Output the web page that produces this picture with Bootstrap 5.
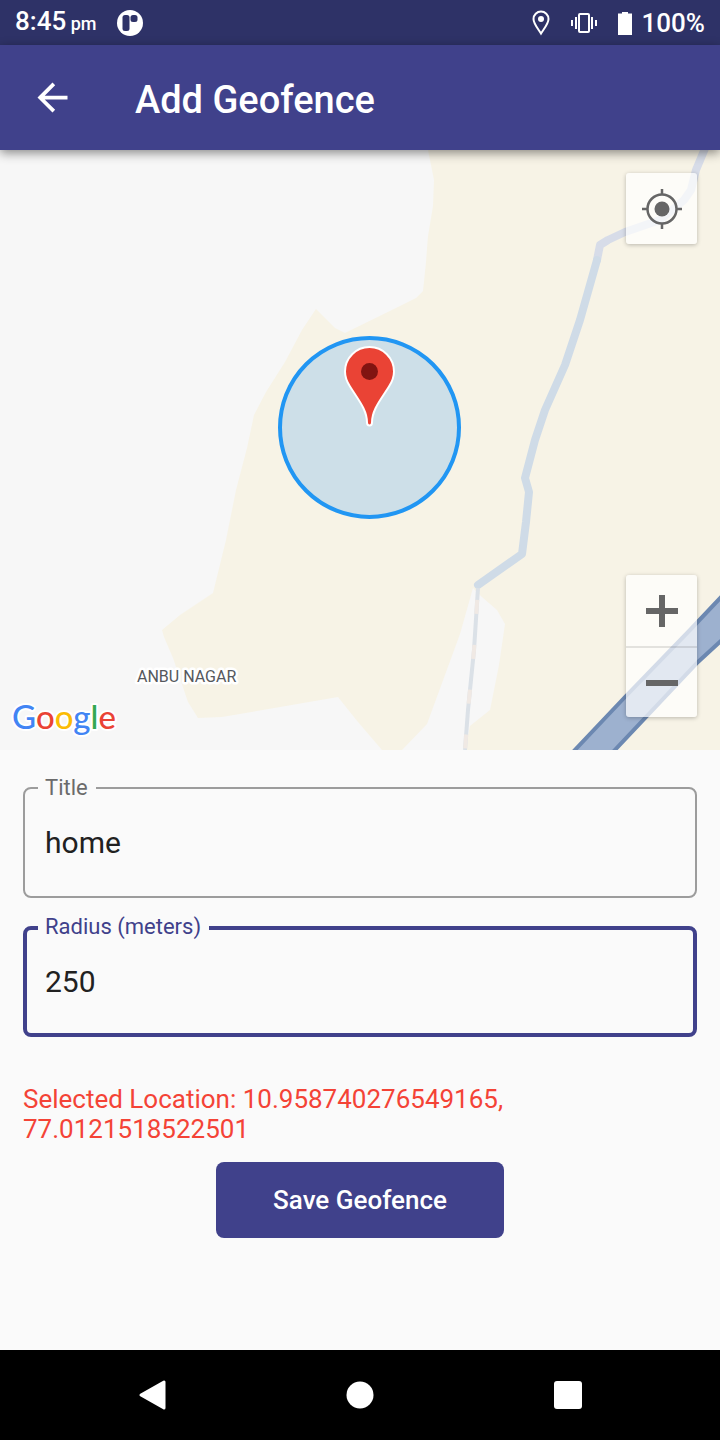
<!DOCTYPE html>
<html lang="en">
<head>
<meta charset="utf-8">
<meta name="viewport" content="width=device-width, initial-scale=1">
<title>Add Geofence</title>
<link href="https://cdn.jsdelivr.net/npm/bootstrap@5.3.0/dist/css/bootstrap.min.css" rel="stylesheet">
<style>
  :root { --brand: #40418b; --brand-dark: #2e3267; }
  body { font-family: Roboto, "Noto Sans", sans-serif; background: #fafafa; color: #212121; }
  .status-bar { height: 45px; padding: 0 15px; background: var(--brand-dark); font-size: 26px; font-weight: 500; line-height: 48px; }
  .status-bar .meridiem { margin-left: -2px; font-size: 18px; }
  .status-icons { gap: 21px; margin-right: 10px; }
  .app-badge { margin-left: 20px; }
  .app-bar { height: 105px; padding: 0 30px; gap: 60px; background: var(--brand); box-shadow: 0 3px 10px rgba(0,0,0,.45); z-index: 2; }
  .app-bar h1 { font-size: 38px; font-weight: 500; line-height: 48px; }
  .pane { flex: 1 1 0; }
  .map-pane { min-height: 400px; }
  .map-art { position: absolute; inset: 0; width: 100%; height: 100%; }
  .map-label { font-size: 16px; fill: #55585d; stroke: #fff; stroke-width: 5px; paint-order: stroke; stroke-linejoin: round; }
  .map-logo { font-family: Lato, sans-serif; font-size: 33px; font-weight: 500; stroke: #fff; stroke-width: 4px; paint-order: stroke; stroke-linejoin: round; }
  .map-ctl { width: 71px; background: rgba(255,255,255,.7); border-radius: 3px; box-shadow: 0 1px 4px rgba(0,0,0,.25); right: 23px; overflow: hidden; }
  .map-ctl.locate { top: 23px; }
  .map-ctl.zoom { bottom: 33px; }
  .map-ctl button { height: 71px; }
  .map-ctl button + button { border-top: 2px solid rgba(0,0,0,.1) !important; }
  .form-body { padding: 37px 23px 24px; }
  .outlined { margin-bottom: 28px; }
  .outlined label { position: absolute; top: -14px; left: 15px; padding: 0 8px 0 7px; background: #fafafa; color: #6b6b6b; font-size: 22px; line-height: 30px; }
  .outlined input { height: 111px; padding: 0 20px; border: 2px solid #9c9c9c; border-radius: 8px; background: transparent; color: #212121; font-size: 30px; }
  .outlined.active label { color: var(--brand); }
  .outlined.active input { border: 4px solid var(--brand); padding: 0 18px; }
  .location { margin: 47px 0 18px; color: #f44336; font-size: 26px; line-height: 30px; }
  .btn-save { height: 76px; padding: 0 57px; border-radius: 8px; background: var(--brand); color: #fff; font-size: 26px; font-weight: 500; }
  .btn-save:hover { background: var(--brand-dark); color: #fff; }
  .nav-keys { height: 90px; }
</style>
</head>
<body>
<div class="d-flex flex-column min-vh-100">
  <div class="status-bar d-flex align-items-center text-white">
    <span>8:45 <span class="meridiem">pm</span></span>
    <svg class="app-badge me-auto" width="28" height="28" viewBox="0 0 28 28" aria-hidden="true">
      <circle cx="14" cy="14" r="13" fill="#fff"/>
      <rect x="6.500" y="6" width="7" height="16" rx="2.500" fill="#2e3267"/>
      <rect x="14.500" y="6" width="7" height="7" rx="2.500" fill="#2e3267"/>
    </svg>
    <div class="status-icons d-flex align-items-center">
      <svg width="18" height="26" viewBox="0 0 18 26" fill="none" stroke="#fff" stroke-width="2" aria-hidden="true">
        <path d="M9 23.500C7 20 1.500 14 1.500 9a7.500 7.500 0 0 1 15 0c0 5-5.500 11-7.500 14.500Z"/>
        <circle cx="9" cy="9" r="3" fill="#fff" stroke="none"/>
      </svg>
      <svg width="26" height="22" viewBox="0 0 26 22" fill="none" stroke="#fff" stroke-width="2" aria-hidden="true">
        <rect x="8" y="2" width="10" height="18" rx="1"/><path d="M5 5v12M1 8v6M21 5v12M25 8v6"/>
      </svg>
      <svg width="14" height="24" viewBox="0 0 14 24" fill="#fff" aria-hidden="true"><path d="M4 1h6v1.500h4V24H0V2.500h4Z"/></svg>
    </div>
    <span>100%</span>
  </div>

  <header class="app-bar d-flex align-items-center position-relative text-white">
    <button class="btn p-0 border-0 text-white d-flex" type="button" aria-label="Back">
      <svg width="45" height="45" viewBox="0 0 24 24" fill="currentColor"><path d="M20 11H7.830l5.590-5.590L12 4l-8 8 8 8 1.410-1.410L7.830 13H20v-2z"/></svg>
    </button>
    <h1 class="m-0 pt-1">Add Geofence</h1>
  </header>

  <section class="pane map-pane position-relative overflow-hidden" aria-label="Map">
    <svg class="map-art" viewBox="0 150 720 600" preserveAspectRatio="xMidYMid slice">
      <rect y="150" width="720" height="600" fill="#f7f7f7"/>
      <!-- land -->
      <path fill="#f7f3e6" d="M428 150 434 180 433 206 428 236 426 262 423 291 416 298 400 306 345 333 335 328 316 309 302 330 285 362 266 392 254 415 247 448 236 490 226 540 213 593 180 615 162 630 164 637 173 658 188 702 198 718 222 717 338 697 358 722 382 750H720V150Z"/>
      <path fill="#f7f7f7" d="M402 750 427 724 460 634 473 588 482 597 497 610 505 624 499 665 490 710 470 726 465 750Z"/>
      <!-- river -->
      <g fill="none" stroke-width="8" stroke-linejoin="round" stroke-linecap="round">
        <path stroke="#d7dce8" d="M706 146 696 170 691 190 684 200 660 220 625 232 608 240 600 245 597 260"/>
        <path stroke="#cfdbe7" d="M597 260 580 320 565 365 545 410 535 440 525 478 529 492 526 522 522 554 478 585"/>
      </g>
      <path fill="none" stroke="#dbe1e7" stroke-width="4" d="M478 588 474 650 468 710 465 750"/>
      <path fill="none" stroke="#f0e9e4" stroke-width="4" stroke-dasharray="14 31" stroke-dashoffset="-12" d="M478 588 474 650 468 710 465 750"/>
      <!-- highway -->
      <path fill="#9db1cf" stroke="#6c88b1" stroke-width="4" d="M573 752 625 697 690 630 724 594V638L698 662 613 752Z"/>
      <!-- geofence -->
      <circle cx="369.500" cy="427.500" r="89.500" fill="#cddfe8" stroke="#2196f3" stroke-width="4"/>
      <path fill="#ea4335" stroke="#fff" stroke-width="2" d="M369.500 347a24.500 24.500 0 0 0-24.500 24.500c0 6 2 10.500 5 15 8 13 17 23 17 36 0 4 5 4 5 0 0-13 9-23 17-36 3-4.500 5-9 5-15A24.500 24.500 0 0 0 369.500 347Z"/>
      <circle cx="369.500" cy="371.500" r="8.500" fill="#811411"/>
      <text class="map-label" x="137" y="682">ANBU NAGAR</text>
      <text class="map-logo" x="12" y="729"><tspan fill="#4285f4">G</tspan><tspan fill="#ea4335">o</tspan><tspan fill="#fbbc05">o</tspan><tspan fill="#4285f4">g</tspan><tspan fill="#34a853">l</tspan><tspan fill="#ea4335">e</tspan></text>
    </svg>
    <div class="map-ctl locate position-absolute">
      <button class="btn w-100 p-0 border-0 rounded-0 d-flex align-items-center justify-content-center" type="button" aria-label="My location">
        <svg width="40" height="40" viewBox="0 0 40 40" fill="none" stroke="#666" stroke-width="2.500"><circle cx="20" cy="20" r="14.500"/><circle cx="20" cy="20" r="7.500" fill="#666" stroke="none"/><path d="M20 0v6M20 34v6M0 20h6M34 20h6"/></svg>
      </button>
    </div>
    <div class="map-ctl zoom position-absolute">
      <button class="btn w-100 p-0 border-0 rounded-0 d-flex align-items-center justify-content-center" type="button" aria-label="Zoom in">
        <svg width="32" height="32" viewBox="0 0 32 32" stroke="#666" stroke-width="6"><path d="M0 16h32M16 0v32"/></svg>
      </button>
      <button class="btn w-100 p-0 border-0 rounded-0 d-flex align-items-center justify-content-center" type="button" aria-label="Zoom out">
        <svg width="32" height="32" viewBox="0 0 32 32" stroke="#666" stroke-width="6"><path d="M0 16h32"/></svg>
      </button>
    </div>
  </section>

  <form class="pane">
    <div class="form-body">
      <div class="outlined position-relative">
        <label for="title">Title</label>
        <input class="d-block w-100" id="title" type="text" value="home">
      </div>
      <div class="outlined active position-relative">
        <label for="radius">Radius (meters)</label>
        <input class="d-block w-100" id="radius" type="text" inputmode="numeric" value="250">
      </div>
      <p class="location">Selected Location: 10.958740276549165, 77.0121518522501</p>
      <div class="text-center">
        <button class="btn btn-save border-0" type="button">Save Geofence</button>
      </div>
    </div>
  </form>

  <nav class="nav-keys d-flex px-5 bg-black" aria-label="System navigation">
    <button class="btn border-0 p-0 flex-fill w-100" type="button" aria-label="Back"><svg width="28" height="32" viewBox="0 0 28 32"><path d="M3 16 26 3v26Z" fill="#fff" stroke="#fff" stroke-width="3" stroke-linejoin="round"/></svg></button>
    <button class="btn border-0 p-0 flex-fill w-100" type="button" aria-label="Home"><svg width="28" height="28" viewBox="0 0 28 28"><circle cx="14" cy="14" r="13.500" fill="#fff"/></svg></button>
    <button class="btn border-0 p-0 flex-fill w-100" type="button" aria-label="Recent apps"><svg width="28" height="28" viewBox="0 0 28 28"><rect width="28" height="28" rx="3" fill="#fff"/></svg></button>
  </nav>
</div>
<script src="https://cdn.jsdelivr.net/npm/bootstrap@5.3.0/dist/js/bootstrap.bundle.min.js"></script>
</body>
</html>
